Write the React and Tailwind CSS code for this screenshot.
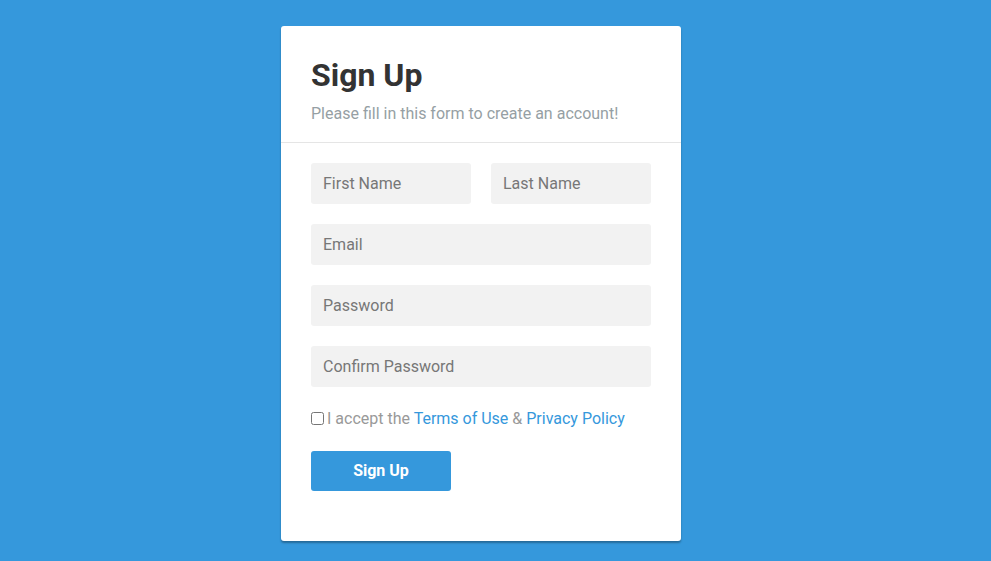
import React from 'react';

const inputClass =
  'block w-full h-[41px] rounded-[3px] bg-[#f2f2f2] px-3 text-base text-[#555] placeholder:text-[#777] outline-none';

export default function App() {
  return (
    <div className="min-h-screen w-full bg-[#3598dc] pt-[26px] pl-[281px] pb-[20px] font-['Roboto',sans-serif]">
      <div className="w-[400px] rounded-[3px] bg-white shadow-[0_2px_2px_rgba(0,0,0,0.3)]">
        {/* Header */}
        <div className="border-b border-[#e5e5e5] px-[30px] pt-[32px] pb-[16px]">
          <h2 className="text-[32px] font-bold leading-[35px] text-[#333]">Sign Up</h2>
          <p className="mt-[9px] text-base leading-[24px] text-[#969fa4]">
            Please fill in this form to create an account!
          </p>
        </div>

        {/* Form */}
        <form className="px-[30px] pt-[20px] pb-[50px]" onSubmit={(e) => e.preventDefault()}>
          <div className="flex gap-5">
            <input className={inputClass} placeholder="First Name" />
            <input className={inputClass} placeholder="Last Name" />
          </div>
          <input className={`${inputClass} mt-5`} placeholder="Email" type="email" />
          <input className={`${inputClass} mt-5`} placeholder="Password" type="password" />
          <input className={`${inputClass} mt-5`} placeholder="Confirm Password" type="password" />

          <label className="mt-[21px] flex items-center h-[22px] text-base text-[#999]">
            <input type="checkbox" className="mr-[3px] mt-[-2px] h-[13px] w-[13px]" />
            <span>
              I accept the <a href="#" className="text-[#3598dc]">Terms of Use</a> &amp;{' '}
              <a href="#" className="text-[#3598dc]">Privacy Policy</a>
            </span>
          </label>

          <button
            type="submit"
            className="mt-[21px] h-[40px] w-[140px] rounded-[3px] bg-[#3598dc] text-base font-bold text-white"
          >
            Sign Up
          </button>
        </form>
      </div>
    </div>
  );
}
